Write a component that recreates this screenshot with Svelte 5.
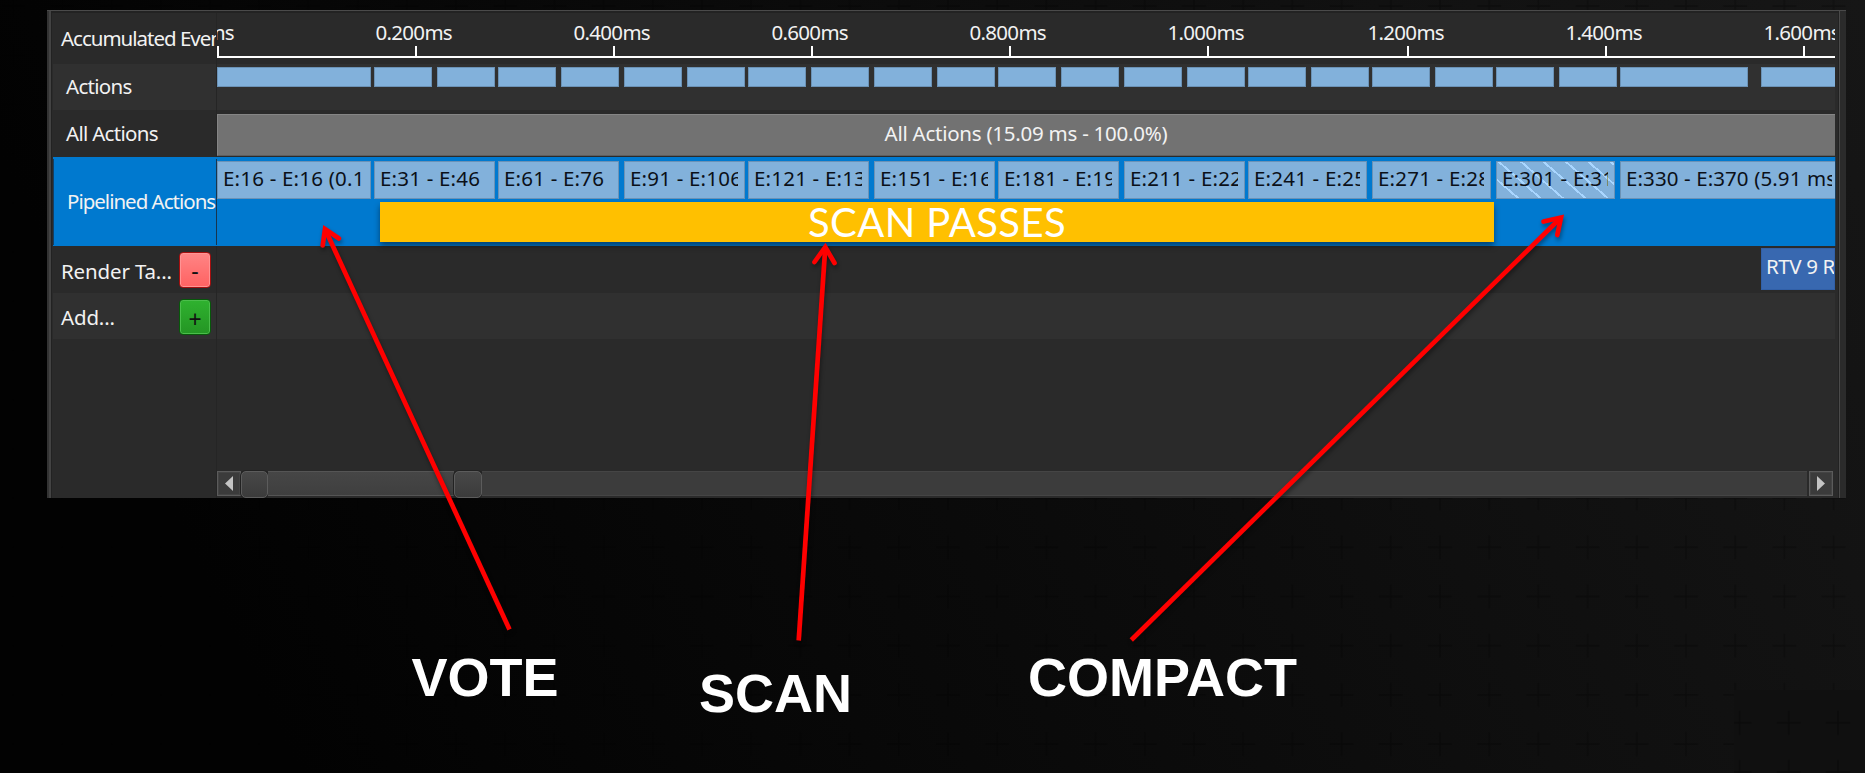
<script>
  const ORIGIN = 217;
  const ticks = [
    { x: 218, label: '0.000ms', origin: true },
    { x: 416, label: '0.200ms' },
    { x: 614, label: '0.400ms' },
    { x: 812, label: '0.600ms' },
    { x: 1010, label: '0.800ms' },
    { x: 1208, label: '1.000ms' },
    { x: 1408, label: '1.200ms' },
    { x: 1606, label: '1.400ms' },
    { x: 1804, label: '1.600ms' }
  ];

  // Turns [start, end, text] spans into flow items (gap before + width).
  function flow(spans) {
    let at = ORIGIN;
    return spans.map(([start, end, text]) => {
      const item = { gap: start - at, width: end - start, text };
      at = end;
      return item;
    });
  }

  const actions = flow([
    [217, 371], [374, 432], [437, 495], [498, 556], [561, 619], [624, 682],
    [687, 745], [748, 806], [811, 869], [874, 932], [937, 995], [998, 1056],
    [1061, 1119], [1124, 1182], [1187, 1245], [1248, 1306], [1311, 1369],
    [1372, 1430], [1435, 1493], [1496, 1554], [1559, 1617], [1620, 1748], [1761, 1836]
  ]);
  const pipelined = flow([
    [217, 371, 'E:16 - E:16 (0.13 ms)'], [374, 495, 'E:31 - E:46'], [498, 619, 'E:61 - E:76'],
    [624, 745, 'E:91 - E:106'], [748, 869, 'E:121 - E:136'], [874, 995, 'E:151 - E:166'],
    [998, 1119, 'E:181 - E:196'], [1124, 1245, 'E:211 - E:226'], [1248, 1367, 'E:241 - E:256'],
    [1372, 1491, 'E:271 - E:286'], [1496, 1615, 'E:301 - E:316'], [1620, 1836, 'E:330 - E:370 (5.91 ms)']
  ]);
  const arrows = [
    { line: 'M509.5 629.5L325 229', head: 'M322.7 245.5L325 229L339 238.5' },
    { line: 'M798.7 640.5L825.3 247', head: 'M814.5 262L825.3 247L834.5 263' },
    { line: 'M1131.3 640L1561 217.5', head: 'M1543.5 221.5L1561 217.5L1557.3 235' }
  ];
</script>

<div class="slide">
  <svg class="backdrop" width="1865" height="773" aria-hidden="true">
    <defs>
      <linearGradient id="shade" x1="0" y1="0.2" x2="1" y2="0">
        <stop offset="0" stop-color="#020202" />
        <stop offset="0.5" stop-color="#0c0c0c" />
        <stop offset="1" stop-color="#161616" />
      </linearGradient>
      <pattern id="cross" x="1415.4" y="522.7" width="49.2" height="49.2" patternUnits="userSpaceOnUse">
        <path d="M12.6 24.6h24M24.6 12.6v24" stroke="#000" stroke-opacity="0.3" stroke-width="1.3" />
      </pattern>
      <pattern id="crossCorner" x="1715" y="698.2" width="49.2" height="49.2" patternUnits="userSpaceOnUse">
        <path d="M12.6 24.6h24M24.6 12.6v24" stroke="#000" stroke-opacity="0.35" stroke-width="1.3" />
      </pattern>
    </defs>
    <rect width="1865" height="773" fill="url(#shade)" />
    <rect width="1865" height="773" fill="url(#cross)" />
    <rect x="1734" y="690" width="131" height="83" fill="#101010" />
    <rect x="1734" y="690" width="131" height="83" fill="url(#crossCorner)" />
  </svg>

  <section class="panel">
    <div class="row ruler">
      <div class="name flush tight">Accumulated Events</div>
      <div class="track scale">
        {#each ticks as t}
          <span class="tick" class:origin={t.origin} style:left="{t.x - ORIGIN - 1}px"><b>{t.label}</b></span>
        {/each}
      </div>
    </div>
    <div class="row alt">
      <div class="name raised">Actions</div>
      <div class="track small">
        {#each actions as a}
          <i class="bar" style:margin-left="{a.gap}px" style:width="{a.width}px"></i>
        {/each}
      </div>
    </div>
    <div class="row all">
      <div class="name raised">All Actions</div>
      <div class="track"><div class="total">All Actions (15.09 ms - 100.0%)</div></div>
    </div>
    <div class="row selected">
      <div class="name tight">Pipelined Actions</div>
      <div class="track">
        {#each pipelined as p, i}
          <div class="bar" class:hatched={i === 10} class:last={i === 11} style:margin-left="{p.gap}px" style:width="{p.width}px">
            <span>{p.text}</span>
          </div>
        {/each}
      </div>
    </div>
    <div class="row targets">
      <div class="name flush"><span>Render Ta...</span><button class="remove">-</button></div>
      <div class="track"><div class="target">RTV 9 Render</div></div>
    </div>
    <div class="row alt">
      <div class="name flush"><span>Add...</span><button class="add">+</button></div>
      <div class="track"></div>
    </div>
    <div class="row rest">
      <div class="name"></div>
      <div class="track">
        <div class="scrollbar">
          <div class="step"><svg width="8" height="15"><path d="M8 0v15L0 7.5z" fill="#c4c4c4" /></svg></div>
          <div class="grip"></div>
          <div class="thumb"></div>
          <div class="grip end"></div>
          <div class="groove"></div>
          <div class="step right"><svg width="8" height="15"><path d="M0 0v15L8 7.5z" fill="#c4c4c4" /></svg></div>
        </div>
      </div>
    </div>
  </section>

  <div class="passes">SCAN PASSES</div>

  <svg class="arrows" width="1865" height="773" aria-hidden="true">
    {#each arrows as a}
      <path d={a.line} />
      <path d={a.head} stroke-linecap="round" />
    {/each}
  </svg>

  <strong class="caption vote">VOTE</strong>
  <strong class="caption scan">SCAN</strong>
  <strong class="caption compact">COMPACT</strong>
</div>

<style>
  :global(body) { margin: 0; background: #000; }
  .slide {
    position: relative; box-sizing: border-box; width: 1865px; height: 773px;
    padding: 10px 19px 0 47px; overflow: hidden;
    font: 20.5px/24px "Noto Sans", "Open Sans", sans-serif; letter-spacing: -0.7px;
  }
  .backdrop, .arrows { position: absolute; left: 0; top: 0; }
  .arrows { fill: none; stroke: #f00; stroke-width: 4.7; filter: drop-shadow(1px 3px 2px rgb(0 0 0 / .4)); }

  .panel {
    position: relative; box-sizing: border-box; height: 488px; width: 1799px;
    display: flex; flex-direction: column; padding: 2px 10px 0 6px;
    background: #2a2a2a; color: #f2f2f2;
    border-top: 1px solid #4a4a4a;
    box-shadow: inset 2px 0 #333, inset 4px 0 #434343, inset 5px 0 #222, inset -6px 0 #2b2b2b, inset -7px 0 #4a4a4a, inset -8px 0 #222, inset 0 2px #222;
  }
  .row { display: flex; flex: none; height: 46px; }
  .name {
    box-sizing: border-box; width: 164px; flex: none; padding: 0 5px 0 13px;
    display: flex; align-items: center; justify-content: space-between;
    white-space: nowrap; overflow: hidden; border-right: 1px solid #252525;
  }
  .name.flush { padding-left: 8px; }
  .name.tight { letter-spacing: -1px; padding-right: 0; padding-bottom: 2px; }
  .name.raised { padding-bottom: 2px; }
  .name span { padding-top: 2px; letter-spacing: -0.15px; }
  .track { flex: none; width: 1618px; display: flex; overflow: hidden; position: relative; }
  .alt .track, .alt .name { background: #303030; }

  .ruler { height: 51px; }
  .scale { height: 45px; box-sizing: border-box; border-bottom: 2px solid #fff; }
  .tick { position: absolute; bottom: 0; width: 2px; height: 10px; background: #fff; }
  .tick b { position: absolute; right: -35px; bottom: 12px; font-weight: 400; }
  .tick.origin b { right: -15px; }

  .bar { box-sizing: border-box; flex: none; background: #82b1db; border: 1px solid #6b92b6; height: 38px; }
  .small { align-items: flex-start; padding-top: 3px; }
  .small .bar { height: 20px; }
  .all { height: 47px; }
  .total {
    box-sizing: border-box; width: 100%; height: 42px; margin-top: 4px; padding-right: 1px;
    background: #727272; border: 1px solid #858585; border-right: 0; border-bottom-color: #5e5e5e;
    text-align: center; line-height: 36px; letter-spacing: -0.25px;
  }
  .selected { height: 89px; box-sizing: border-box; background: #0079cf; }
  .selected .name { border-left: 1px solid #163f62; border-right-color: #17354e; margin: 2px 0 1px; }
  .selected .track { padding-top: 4px; box-sizing: border-box; box-shadow: 1px 0 #1b3c58; }
  .selected .bar { padding: 0 6px 0 5px; color: #0b1018; line-height: 32px; letter-spacing: 0.2px; }
  .selected .bar span { display: block; overflow: hidden; white-space: nowrap; }
  .selected .bar.last { padding-right: 4px; border-right: 0; letter-spacing: 0.1px; }
  .selected .hatched {
    background-image: repeating-linear-gradient(41deg, transparent 0 12.8px, #a9d6ff 12.8px 14.7px);
  }
  .targets { height: 47px; }
  .target {
    box-sizing: border-box; margin-left: 1544px; width: 75px; height: 42px; margin-top: 2px; padding-left: 4px;
    background: #3868b0; border: 1px solid #3160a8; white-space: nowrap; overflow: hidden; line-height: 35px;
    letter-spacing: -0.4px;
  }
  button {
    box-sizing: border-box; width: 32px; height: 36px; padding: 3px 0 0; border-radius: 4px;
    font: 23px/24px "Noto Sans", sans-serif; color: #111;
  }
  .remove { padding-top: 1px; border: 1px solid #a50f0f; background: linear-gradient(#ff8585, #ff6262); box-shadow: inset 0 0 0 1px #ff9494; }
  .add { margin-top: 2px; border: 1px solid #07570a; background: linear-gradient(#2fb22f, #249524); box-shadow: inset 0 0 0 1px #4bbd4b; }

  .rest { flex: 1; }
  .rest .track { align-items: flex-end; }
  .scrollbar { display: flex; width: 1616px; height: 27px; align-items: flex-start; }
  .scrollbar > div { box-sizing: border-box; height: 25px; flex: none; }
  .step {
    width: 24px; display: flex; align-items: center; justify-content: center;
    background: #3b3b3b; border: 1px solid #5b5b5b; box-shadow: inset 0 0 0 1px #444;
  }
  .scrollbar .grip {
    width: 27px; height: 27px; border: 1px solid #5c5c5c; border-radius: 5px;
    background: linear-gradient(#484848, #3b3b3b); box-shadow: 0 0 0 1px #222;
  }
  .thumb { width: 186px; background: linear-gradient(#464646, #3f3f3f); border: 1px solid #555; border-width: 1px 0; }
  .scrollbar .end { width: 28px; }
  .scrollbar > .groove { flex: 1; background: #3c3c3c; border: 1px solid #454545; border-width: 1px 0; }
  .right { margin-left: 2px; }

  .passes {
    position: absolute; left: 380px; top: 202px; width: 1114px; height: 40px;
    background: #ffc000; color: #fff; box-shadow: 0 4px 6px rgb(0 0 0 / .45);
    font: 40px/41px Lato, sans-serif; letter-spacing: 0.4px; text-align: center;
  }
  .caption {
    position: absolute; color: #fff; letter-spacing: 0;
    font: bold 54px/60px "Liberation Sans", Arial, sans-serif;
  }
  .vote { left: 411.5px; top: 647px; }
  .scan { left: 699px; top: 663px; }
  .compact { left: 1028px; top: 647px; }
</style>
